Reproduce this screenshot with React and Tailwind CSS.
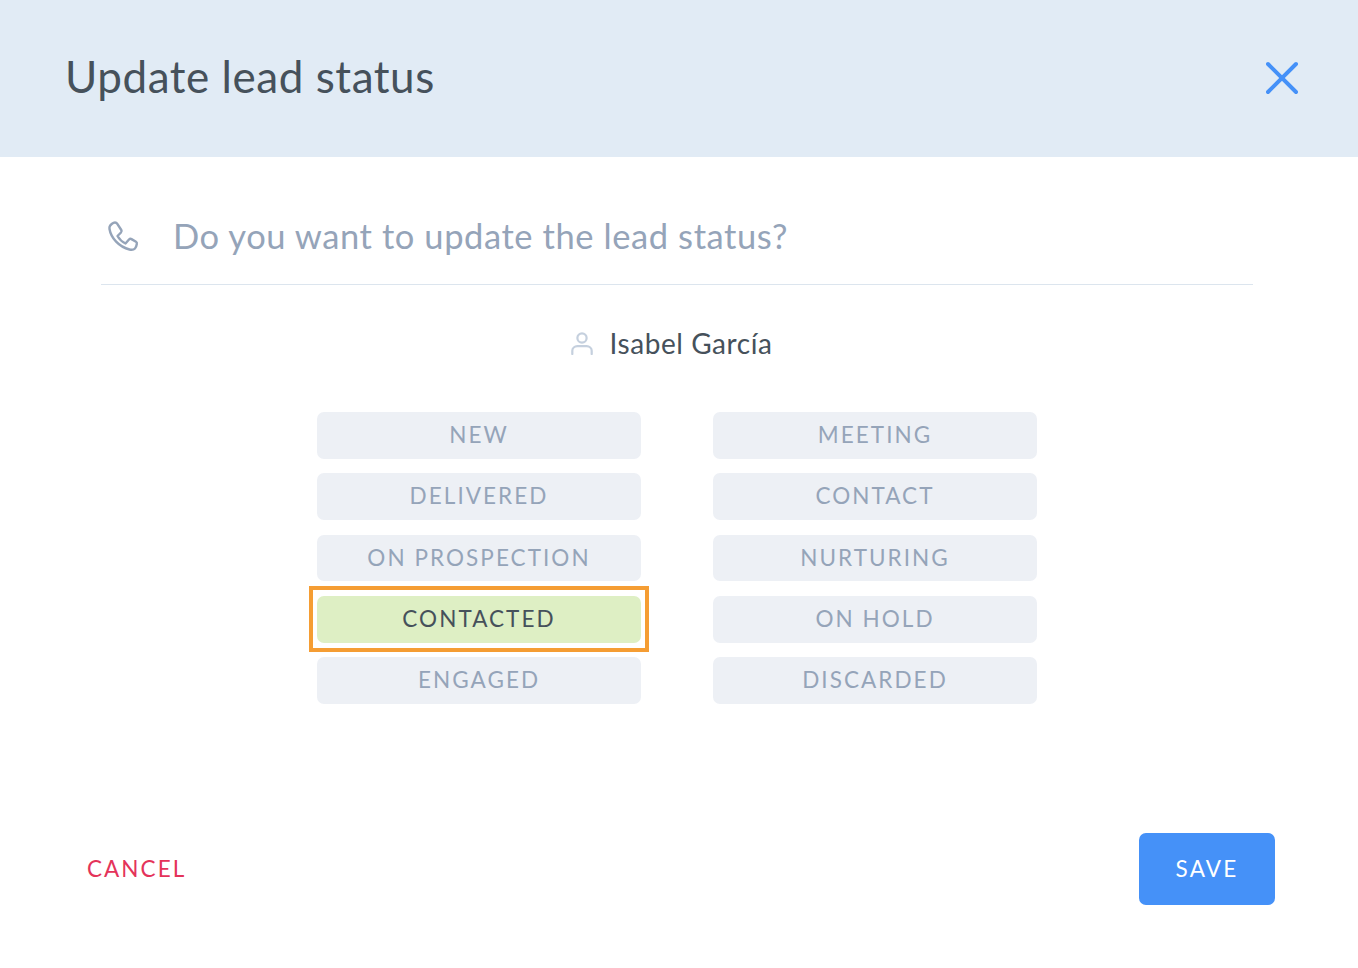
import { X } from 'lucide-react'

const leftStatuses = ['NEW', 'DELIVERED', 'ON PROSPECTION', 'CONTACTED', 'ENGAGED']
const rightStatuses = ['MEETING', 'CONTACT', 'NURTURING', 'ON HOLD', 'DISCARDED']

function StatusButton({ label }) {
  const active = label === 'CONTACTED'
  return (
    <div
      className={`relative flex h-[46.75px] items-center justify-center rounded-[7px] pb-[1px] text-[22.5px] tracking-[2.05px] ${
        active ? 'bg-[#deefc4] text-[#46515b]' : 'bg-[#edf0f5] text-[#95a4b9]'
      }`}
    >
      {label}
      {active && (
        <div className="absolute -top-[10px] -bottom-[9px] -left-[8px] -right-[8px] border-[4px] border-[#f59d33]" />
      )}
    </div>
  )
}

export default function App() {
  return (
    <div className="flex h-[968px] w-full flex-col bg-white font-['Lato',sans-serif]">
      {/* Header */}
      <div className="flex h-[157px] items-center justify-between bg-[#e1ebf5] pl-[65px] pr-[48px]">
        <h1 className="mb-[5px] text-[44px] font-normal tracking-[0.55px] text-[#46515b]">Update lead status</h1>
        <X className="mb-[1px] h-[56px] w-[56px] text-[#4591f8]" strokeWidth={1.7} />
      </div>

      {/* Question */}
      <div className="ml-[101px] mr-[105px] flex h-[128px] items-center border-b border-[#dce5ee] pl-[5px] pt-[31px]">
        <svg className="h-[34px] w-[34px] text-[#95a4b9]" viewBox="0 0 34 34" fill="none" stroke="currentColor" strokeWidth="2.4" strokeLinejoin="round">
          <path d="M3.5 8 C4 6 7 3.5 9 3.5 C10 3.5 10.8 4 11.3 4.8 L15.3 11 C15.8 11.8 15.7 12.8 15 13.5 L11.5 17 C13.5 20.5 16 22.8 19.5 24.5 L23 20.5 C23.7 19.8 24.6 19.6 25.5 20.1 L30 22.8 C30.8 23.3 31 24.2 30.8 25 C30.5 26.8 30 28.5 29 29.5 C27.5 31 25.5 31 23.5 30.5 C13 28 5 19 3.5 10 Z" />
        </svg>
        <span className="ml-[33px] text-[34.5px] tracking-[0.58px] text-[#95a4b9]">Do you want to update the lead status?</span>
      </div>

      {/* Lead name */}
      <div className="flex h-[127px] items-center justify-center pb-[12px] pr-[16px]">
        <svg className="h-[24px] w-[24px] text-[#c5d0de]" viewBox="0 0 26 26" fill="none" stroke="currentColor" strokeWidth="2.4" strokeLinecap="round">
          <circle cx="13" cy="7.5" r="5" />
          <path d="M2.5 25 V21.5 C2.5 18.5 5 16.5 8 16.5 H18 C21 16.5 23.5 18.5 23.5 21.5 V25" />
        </svg>
        <span className="ml-[16px] text-[28px] tracking-[0.55px] text-[#46515b]">Isabel García</span>
      </div>

      {/* Status grid */}
      <div className="flex justify-center gap-[72px] pr-[4px]">
        <div className="flex w-[324px] flex-col gap-[14.5px]">
          {leftStatuses.map((s) => (
            <StatusButton key={s} label={s} />
          ))}
        </div>
        <div className="flex w-[324px] flex-col gap-[14.5px]">
          {rightStatuses.map((s) => (
            <StatusButton key={s} label={s} />
          ))}
        </div>
      </div>

      {/* Footer */}
      <div className="mt-[129px] flex items-center justify-between pl-[87px] pr-[83px]">
        <span className="text-[22.5px] tracking-[2.05px] text-[#e4335a]">CANCEL</span>
        <div className="flex h-[72px] w-[136px] items-center justify-center rounded-[7px] bg-[#4591f8] text-[22.5px] tracking-[2.2px] text-white">
          SAVE
        </div>
      </div>
    </div>
  )
}
